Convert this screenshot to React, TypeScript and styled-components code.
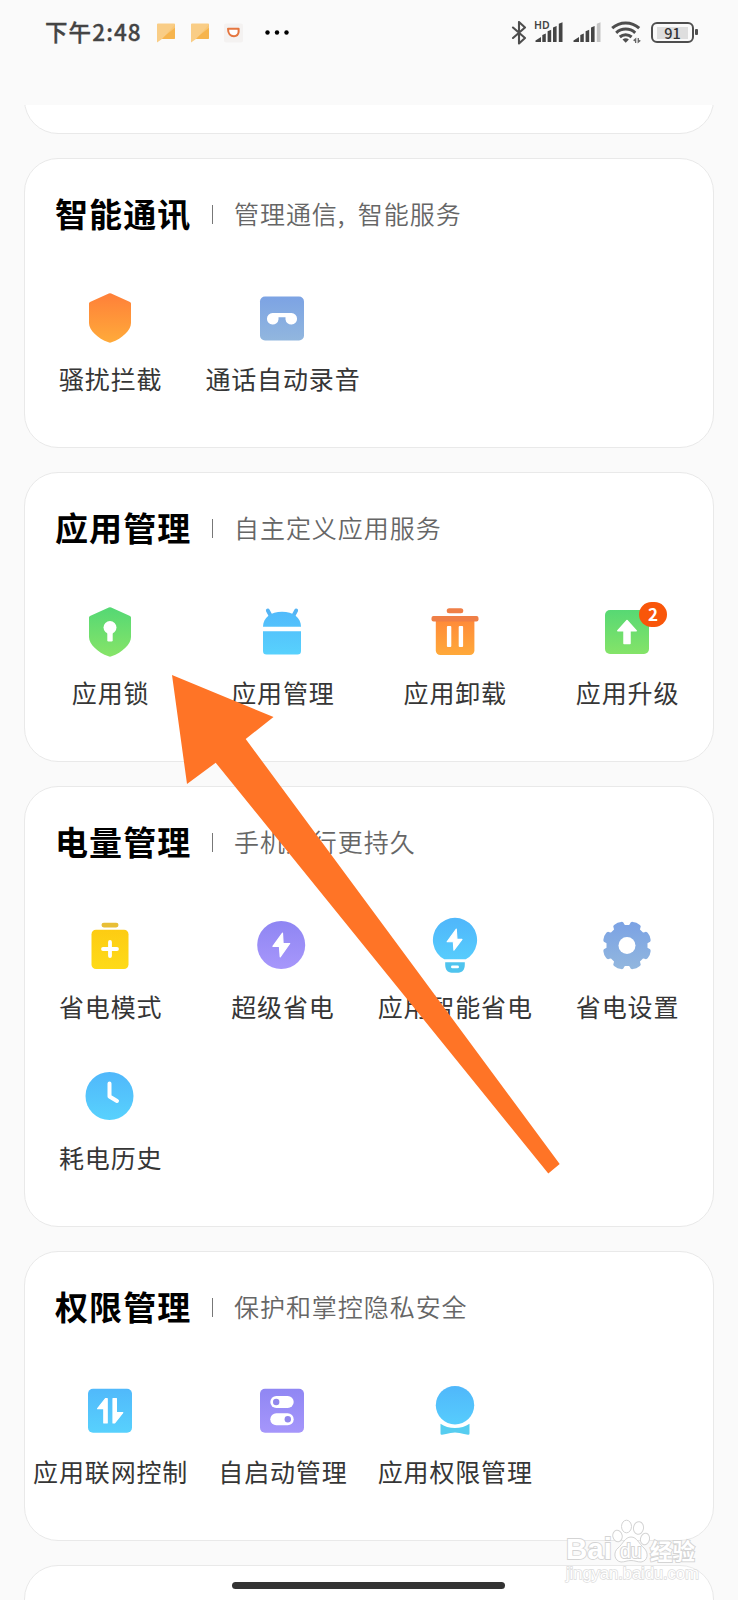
import React from "react";
import styled, { createGlobalStyle } from "styled-components";

const GlobalStyle = createGlobalStyle`
  * { box-sizing: border-box; }
  body { margin: 0; background: #fafafa; }
`;

const Screen = styled.div`
  position: relative;
  display: flex;
  flex-direction: column;
  width: 738px;
  height: 1600px;
  overflow: hidden;
  background: #fafafa;
  font-family: "Noto Sans CJK SC", "Noto Sans", sans-serif;
`;

/* ---------- status bar ---------- */

const StatusBar = styled.header`
  display: flex;
  justify-content: space-between;
  align-items: flex-start;
  flex: none;
  height: 105px;
  padding: 17px 39px 0 45px;
  color: #444;
`;

const StatusGroup = styled.div`
  display: flex;
  align-items: center;
  height: 31px;
`;

const Clock = styled.span`
  width: 112px;
  margin-top: -2px;
  font-size: 22.5px;
  font-weight: 500;
  line-height: 31px;
  letter-spacing: 1.1px;
  white-space: nowrap;
  -webkit-text-stroke: 0.3px #444;
`;

const Glyph = styled.svg<{ $gap?: number }>`
  display: block;
  flex: none;
  margin-right: ${(p) => p.$gap ?? 0}px;
`;

const SignalWrap = styled.div`
  position: relative;
  margin-right: 10px;
`;

const HdMark = styled.span`
  position: absolute;
  left: -1px;
  top: -3px;
  font: 600 10.5px/12px "Noto Sans", sans-serif;
`;

const BatteryShell = styled.div`
  position: relative;
  display: flex;
  align-items: center;
  justify-content: center;
  width: 43px;
  height: 21px;
  margin-right: 5px;
  border: 2.4px solid #4e4e4e;
  border-radius: 6px;
  background: linear-gradient(#dedede, #dedede) center / 31px 12px no-repeat;
  font: 500 14.5px/16px "Noto Sans CJK SC", sans-serif;
  color: #333;

  &::after {
    content: "";
    position: absolute;
    right: -6px;
    top: 5px;
    width: 3px;
    height: 6px;
    border-radius: 1px;
    background: #4e4e4e;
  }
`;

const MessageGlyph = ({ gap }: { gap: number }) => (
  <Glyph $gap={gap} width="18" height="20" viewBox="0 0 18 20">
    <path d="M1 0.5h16a1 1 0 0 1 1 1v13.5a1 1 0 0 1-1 1H5L0 19.5V1.5a1 1 0 0 1 1-1z" fill="#f9cd86" />
    <path d="M18 1.5v13.5a1 1 0 0 1-1 1H5z" fill="#f6b44d" />
    <path d="M18 0.8v4L7 13.6l-2-1z" fill="#f9cd86" opacity="0.7" />
  </Glyph>
);

const CupGlyph = () => (
  <Glyph $gap={22} width="19" height="20" viewBox="0 0 19 20">
    <rect width="19" height="19" y="0.5" rx="2" fill="#f4f2f1" />
    <path d="M4 5.800h10.600v3.400c-.4 2.600-2.200 4-4.600 4C6.500 13.200 4 10.500 4 5.800z" fill="#fff" stroke="#e5763f" strokeWidth="2" strokeLinejoin="round" />
  </Glyph>
);

const DotsGlyph = () => (
  <Glyph width="24" height="6" viewBox="0 0 24 6">
    {[2.5, 12, 21.5].map((x) => (
      <circle key={x} cx={x} cy="2.500" r="2.200" fill="#000" />
    ))}
  </Glyph>
);

const BluetoothGlyph = () => (
  <Glyph $gap={8} width="16" height="24" viewBox="0 0 16 24">
    <path d="M2 6.500l12 10.500-6 5.500V1L14 6.500 2 17" fill="none" stroke="#4e4e4e" strokeWidth="2.100" strokeLinejoin="round" strokeLinecap="round" />
  </Glyph>
);

const SignalGlyph = ({ weak }: { weak?: boolean }) => (
  <Glyph width="28" height="21" viewBox="0 0 28 21">
    <path d="M0.500 20v-1.500l5.500-3.500v5z" fill="#444" />
    <path d="M7.300 20v-7l3.500-1.500v8.500z" fill="#444" />
    <path d="M12.600 20V9.300l3.600-1.600v12.300z" fill="#444" />
    <path d="M18 20V5.500l3.600-1.600v16.100z" fill="#444" />
    <path d="M23.800 20V1.800L27.500 0.300v19.700z" fill={weak ? "#c4c4c4" : "#444"} />
  </Glyph>
);

const WifiGlyph = () => (
  <Glyph $gap={10} width="30" height="23" viewBox="0 0 30 23">
    <g fill="none" stroke="#4e4e4e" strokeWidth="3">
      <path d="M1.200 7.200a20 20 0 0 1 27 0" />
      <path d="M5.200 11.800a14 14 0 0 1 19 0" />
      <path d="M8.800 16a9 9 0 0 1 11.800 0" />
    </g>
    <path d="M11.500 18.500a5 5 0 0 1 6.400 0l-3.200 3.300z" fill="#4e4e4e" />
    <path d="M25.300 16.500v5.500h-1.300v-1.600l-2-1.200zM26.600 22.500v-5.500h1.300v1.800l2 1z" fill="#666" />
  </Glyph>
);

/* ---------- cards ---------- */

const Scroller = styled.main`
  flex: 1;
  min-height: 0;
  overflow: hidden;
`;

const CardList = styled.div`
  display: flex;
  flex-direction: column;
  gap: 24px;
  margin: -71px 24px 0;
`;

const Card = styled.section<{ $height: number }>`
  flex: none;
  height: ${(p) => p.$height}px;
  padding-top: 31px;
  border: 1px solid #e9e9e9;
  border-radius: 34px;
  background: #fff;
`;

const CardHeader = styled.div`
  display: flex;
  align-items: center;
  height: 48px;
  padding-left: 30px;
`;

const Title = styled.h2`
  margin: -3px 0 0;
  width: 137px;
  font-size: 33px;
  font-weight: 700;
  line-height: 48px;
  letter-spacing: 1.1px;
  color: #000;
  white-space: nowrap;
`;

const Divider = styled.i`
  width: 1px;
  height: 19px;
  margin: 0 21px 0 20px;
  background: #777;
`;

const Subtitle = styled.span`
  margin-top: -2px;
  font-size: 25px;
  font-weight: 350;
  line-height: 36px;
  letter-spacing: 0.95px;
  color: #666;
  white-space: nowrap;
`;

const Comma = styled.span`
  display: inline-block;
  width: 20px;
`;

const Grid = styled.div`
  display: grid;
  grid-template-columns: repeat(4, 172.3px);
  grid-auto-rows: 151px;
  margin: 50px -1px 0;
`;

const Item = styled.div`
  display: flex;
  flex-direction: column;
  align-items: center;
  gap: 12px;
`;

const IconBox = styled.div`
  position: relative;
  width: 60px;
  height: 60px;
`;

const Label = styled.span`
  padding-left: 1px;
  font-size: 25px;
  font-weight: 400;
  line-height: 36px;
  letter-spacing: 0.85px;
  color: #363636;
  white-space: nowrap;
`;

const Badge = styled.span`
  position: absolute;
  left: 42px;
  top: 0;
  width: 28px;
  height: 25px;
  border-radius: 13px;
  background: #f9560a;
  color: #fff;
  font: 600 17px/24px "Noto Sans CJK SC", sans-serif;
  text-align: center;
`;

/* ---------- feature icons ---------- */

const palettes = {
  orange: ["#ff8039", "#ffaa3a"],
  slate: ["#7ba2e4", "#92b7de"],
  green: ["#55d874", "#86e468"],
  blue: ["#50b8fb", "#58d2fd"],
  yellow: ["#fdc912", "#fedb18"],
  purple: ["#8f86f3", "#a797fb"],
};

type Tone = keyof typeof palettes;

const Icon = ({ id, tone, children }: { id: string; tone: Tone; children: (fill: string) => React.ReactNode }) => (
  <svg width="60" height="60" viewBox="0 0 60 60" display="block">
    <defs>
      <linearGradient id={id} gradientUnits="userSpaceOnUse" x1="30" y1="6" x2="30" y2="54">
        <stop offset="0" stopColor={palettes[tone][0]} />
        <stop offset="1" stopColor={palettes[tone][1]} />
      </linearGradient>
    </defs>
    {children(`url(#${id})`)}
  </svg>
);

const SHIELD =
  "M28.800 5.600Q30 5 31.200 5.600L50 14Q51 14.500 51 15.500V35C51 42 42.500 50.500 31.500 54.300Q30 55 28.500 54.300C17.500 50.500 9 42 9 35V15.500Q9 14.500 10 14z";

const gearPath = (() => {
  const pts: string[] = [];
  const at = (r: number, deg: number) => {
    const a = (deg * Math.PI) / 180;
    return `${(30 + r * Math.sin(a)).toFixed(2)} ${(29.5 + r * Math.cos(a)).toFixed(2)}`;
  };
  for (let i = 0; i < 8; i++) {
    const c = i * 45;
    pts.push(`${i ? "L" : "M"}${at(20.6, c - 6)}L${at(20.6, c + 6)}Q${at(22, c + 8)} ${at(23.4, c + 9)}`);
    pts.push(`Q${at(24.3, c + 11)} ${at(24.3, c + 14)}L${at(24.6, c + 22.5)}L${at(24.3, c + 31)}Q${at(24.3, c + 34)} ${at(23.4, c + 36)}Q${at(22, c + 37)} ${at(20.6, c + 39)}`);
  }
  return pts.join("") + "z";
})();

const icons = {
  block: (
    <Icon id="block" tone="orange">
      {(f) => <path d={SHIELD} fill={f} />}
    </Icon>
  ),
  record: (
    <Icon id="record" tone="slate">
      {(f) => (
        <>
          <rect x="8" y="8.500" width="44" height="44" rx="5" fill={f} />
          <path d="M20.500 25H39.500a5.800 5.800 0 1 1-6 6.500V29.200H26.500V31.500A5.800 5.800 0 1 1 20.500 25z" fill="#fff" />
        </>
      )}
    </Icon>
  ),
  lock: (
    <Icon id="lock" tone="green">
      {(f) => (
        <>
          <path d={SHIELD} fill={f} />
          <circle cx="30" cy="25.500" r="6.500" fill="#fff" />
          <rect x="27.300" y="28" width="5.400" height="11.500" rx="1.200" fill="#fff" />
        </>
      )}
    </Icon>
  ),
  apps: (
    <Icon id="apps" tone="blue">
      {(f) => (
        <>
          <path d="M15.800 8.500l3 5.500M44.200 8.500l-3 5.500" stroke="#55b4f4" strokeWidth="3.800" strokeLinecap="round" />
          <path d="M11 24.700C11 15.500 19 9.700 30 9.700s19 5.800 19 15z" fill={f} />
          <path d="M11 29.300h38V49a3.500 3.500 0 0 1-3.500 3.500h-31A3.500 3.500 0 0 1 11 49z" fill={f} />
        </>
      )}
    </Icon>
  ),
  trash: (
    <Icon id="trash" tone="orange">
      {(f) => (
        <>
          <path d="M10.800 17h38.600V48.500a4.500 4.500 0 0 1-4.500 4.500H15.300a4.500 4.500 0 0 1-4.500-4.500z" fill={f} />
          <rect x="6.500" y="14" width="47" height="5.400" rx="2" fill="#ef7f47" />
          <rect x="21.700" y="6.200" width="16.600" height="5" rx="2.500" fill="#ef7f47" />
          <rect x="21.900" y="24" width="4.400" height="21" rx="1" fill="#fff" />
          <rect x="33.700" y="24" width="4.400" height="21" rx="1" fill="#fff" />
        </>
      )}
    </Icon>
  ),
  upgrade: (
    <Icon id="upgrade" tone="green">
      {(f) => (
        <>
          <rect x="8" y="8" width="44" height="44" rx="5" fill={f} />
          <path d="M30 18.600l9.200 10.200H33v12.700H27V28.800H20.800z" fill="#fff" stroke="#fff" strokeWidth="1.500" strokeLinejoin="round" />
        </>
      )}
    </Icon>
  ),
  battery: (
    <Icon id="battery" tone="yellow">
      {(f) => (
        <>
          <rect x="21.500" y="6.800" width="17" height="4.600" rx="2.300" fill="#e8be35" />
          <rect x="11.500" y="13.700" width="37" height="39.300" rx="4.500" fill={f} />
          <path d="M23 33h14M30 26v14" stroke="#fff" strokeWidth="3.800" strokeLinecap="round" />
        </>
      )}
    </Icon>
  ),
  superSaver: (
    <Icon id="superSaver" tone="purple">
      {(f) => (
        <>
          <circle cx="29.200" cy="29" r="24" fill={f} />
          <path d="M30.500 17.200L20.900 30.300H27.400L28.200 40.800L37.700 27.500H31.100z" fill="#fff" stroke="#fff" strokeWidth="1.200" strokeLinejoin="round" />
        </>
      )}
    </Icon>
  ),
  bulb: (
    <Icon id="bulb" tone="blue">
      {(f) => (
        <>
          <path d="M19.300 43.300A22.100 22.100 0 1 1 40.700 43.300z" fill={f} />
          <path d="M31.300 13L22.100 25.700H28.300L28.900 34.200L37 23.400H32z" fill="#fff" stroke="#fff" strokeWidth="1.100" strokeLinejoin="round" />
          <path d="M20.200 46.300h19.600v2.500c0 5-2.500 7.900-6.500 7.900h-6.600c-4 0-6.500-2.900-6.500-7.900z" fill="#4fc4ee" />
          <rect x="26" y="49.500" width="8" height="2.800" rx="1.400" fill="#fff" />
        </>
      )}
    </Icon>
  ),
  gear: (
    <Icon id="gear" tone="slate">
      {(f) => (
        <>
          <path d={gearPath} fill={f} />
          <circle cx="30" cy="29.500" r="8.500" fill="#fff" />
        </>
      )}
    </Icon>
  ),
  history: (
    <Icon id="history" tone="blue">
      {(f) => (
        <>
          <circle cx="29.500" cy="29" r="24" fill={f} />
          <path d="M29.500 16.500V29.500L37 34" fill="none" stroke="#fff" strokeWidth="4" strokeLinecap="round" strokeLinejoin="round" />
        </>
      )}
    </Icon>
  ),
  network: (
    <Icon id="network" tone="blue">
      {(f) => (
        <>
          <rect x="8" y="7.700" width="44" height="44" rx="5" fill={f} />
          <path d="M27.200 17.500V42H23.800V27.700H17.600L25.500 17.500z" fill="#fff" stroke="#fff" strokeWidth="1.200" strokeLinejoin="round" />
          <path d="M33 17.500V42H34.700L42.800 31.700H36.400V17.500z" fill="#fff" stroke="#fff" strokeWidth="1.200" strokeLinejoin="round" />
        </>
      )}
    </Icon>
  ),
  autostart: (
    <Icon id="autostart" tone="purple">
      {(f) => (
        <>
          <rect x="8" y="7.700" width="44" height="44" rx="5" fill={f} />
          <rect x="18.300" y="15" width="23.400" height="12" rx="6" fill="#fff" />
          <rect x="18.300" y="32.200" width="23.400" height="12" rx="6" fill="#fff" />
          <circle cx="24.200" cy="21" r="3.200" fill="#9187ec" />
          <circle cx="35.800" cy="38.200" r="3.200" fill="#9187ec" />
        </>
      )}
    </Icon>
  ),
  permission: (
    <Icon id="permission" tone="blue">
      {(f) => (
        <>
          <path d="M15.500 42.800C23 48.500 37 48.500 44.500 42.800V52.600Q44.500 54 43 53.800L39 53Q30 50 21 53L17 53.800Q15.500 54 15.500 52.600z" fill="#56cdf0" />
          <circle cx="30" cy="24.200" r="19.200" fill={f} />
        </>
      )}
    </Icon>
  ),
};

type Entry = { label: string; icon: keyof typeof icons; badge?: number };
type Section = { title: string; subtitle: React.ReactNode; height: number; items: Entry[] };

const sections: Section[] = [
  {
    title: "智能通讯",
    subtitle: (
      <>
        管理通信<Comma>,</Comma>智能服务
      </>
    ),
    height: 290,
    items: [
      { label: "骚扰拦截", icon: "block" },
      { label: "通话自动录音", icon: "record" },
    ],
  },
  {
    title: "应用管理",
    subtitle: "自主定义应用服务",
    height: 290,
    items: [
      { label: "应用锁", icon: "lock" },
      { label: "应用管理", icon: "apps" },
      { label: "应用卸载", icon: "trash" },
      { label: "应用升级", icon: "upgrade", badge: 2 },
    ],
  },
  {
    title: "电量管理",
    subtitle: "手机运行更持久",
    height: 441,
    items: [
      { label: "省电模式", icon: "battery" },
      { label: "超级省电", icon: "superSaver" },
      { label: "应用智能省电", icon: "bulb" },
      { label: "省电设置", icon: "gear" },
      { label: "耗电历史", icon: "history" },
    ],
  },
  {
    title: "权限管理",
    subtitle: "保护和掌控隐私安全",
    height: 290,
    items: [
      { label: "应用联网控制", icon: "network" },
      { label: "自启动管理", icon: "autostart" },
      { label: "应用权限管理", icon: "permission" },
    ],
  },
];

/* ---------- overlays ---------- */

const Pointer = styled.svg`
  position: absolute;
  left: 172px;
  top: 675px;
`;

const HomeBar = styled.div`
  position: absolute;
  left: 232px;
  bottom: 11px;
  width: 273px;
  height: 7px;
  border-radius: 4px;
  background: #333;
`;

const Watermark = styled.div`
  position: absolute;
  left: 566px;
  top: 1519px;
  width: 134px;
  color: #fff;
  white-space: nowrap;
`;

const BrandRow = styled.div`
  display: flex;
  align-items: flex-end;
  height: 44px;
`;

const BrandWord = styled.span<{ $cjk?: boolean }>`
  font: ${(p) =>
    p.$cjk ? '700 22.5px/25px "Noto Sans CJK SC", sans-serif' : '700 29.5px/28px "Liberation Sans", sans-serif'};
  -webkit-text-stroke: 1.8px #d4d4d4;
  paint-order: stroke fill;
`;

const Paw = styled.div`
  position: relative;
  width: 38px;
  height: 44px;
`;

const PawWord = styled.span`
  position: absolute;
  left: 8px;
  top: 20px;
  font: 400 19.5px/24px "Liberation Sans", sans-serif;
  -webkit-text-stroke: 2px #d4d4d4;
  paint-order: stroke fill;
`;

const Site = styled.div`
  margin-top: 1px;
  font: 400 16.7px/20px "Liberation Sans", sans-serif;
  letter-spacing: -0.1px;
  -webkit-text-stroke: 1.4px #dcdcdc;
  paint-order: stroke fill;
`;

export default function App() {
  return (
    <Screen>
      <GlobalStyle />
      <StatusBar>
        <StatusGroup>
          <Clock>下午2:48</Clock>
          <MessageGlyph gap={16} />
          <MessageGlyph gap={15} />
          <CupGlyph />
          <DotsGlyph />
        </StatusGroup>
        <StatusGroup>
          <BluetoothGlyph />
          <SignalWrap>
            <HdMark>HD</HdMark>
            <SignalGlyph />
          </SignalWrap>
          <SignalWrap>
            <SignalGlyph weak />
          </SignalWrap>
          <WifiGlyph />
          <BatteryShell>91</BatteryShell>
        </StatusGroup>
      </StatusBar>

      <Scroller>
        <CardList>
          <Card $height={100} />
          {sections.map((s) => (
            <Card key={s.title} $height={s.height}>
              <CardHeader>
                <Title>{s.title}</Title>
                <Divider />
                <Subtitle>{s.subtitle}</Subtitle>
              </CardHeader>
              <Grid>
                {s.items.map((it) => (
                  <Item key={it.label}>
                    <IconBox>
                      {icons[it.icon]}
                      {it.badge && <Badge>{it.badge}</Badge>}
                    </IconBox>
                    <Label>{it.label}</Label>
                  </Item>
                ))}
              </Grid>
            </Card>
          ))}
          <Card $height={100} />
        </CardList>
      </Scroller>

      <Pointer width="390" height="500" viewBox="0 0 390 500">
        <path d="M0 0L101.500 42L73.700 64L387.700 489L376.300 498.500L43.700 87.700L15 109z" fill="#ff7426" />
      </Pointer>

      <Watermark>
        <BrandRow>
          <BrandWord>Bai</BrandWord>
          <Paw>
            <svg width="38" height="44" viewBox="0 0 38 44" display="block">
              <g fill="#fff" stroke="#d4d4d4" strokeWidth="1">
                <ellipse cx="14.500" cy="7.500" rx="5" ry="6.300" />
                <ellipse cx="26.500" cy="9" rx="5" ry="6.300" transform="rotate(10 26.500 9)" />
                <ellipse cx="5.500" cy="17" rx="4.700" ry="5.800" transform="rotate(-12 5.500 17)" />
                <ellipse cx="33" cy="20" rx="4.500" ry="5.800" transform="rotate(12 33 20)" />
                <path d="M19 18C13 18 11 25 6 29C1 33 2 42 9 43C13 43 15 41.500 19 41.500S25 43 29 43C36 42 37 34 32 29C27 25 25 18 19 18z" />
              </g>
            </svg>
            <PawWord>du</PawWord>
          </Paw>
          <BrandWord $cjk>经验</BrandWord>
        </BrandRow>
        <Site>jingyan.baidu.com</Site>
      </Watermark>

      <HomeBar />
    </Screen>
  );
}
